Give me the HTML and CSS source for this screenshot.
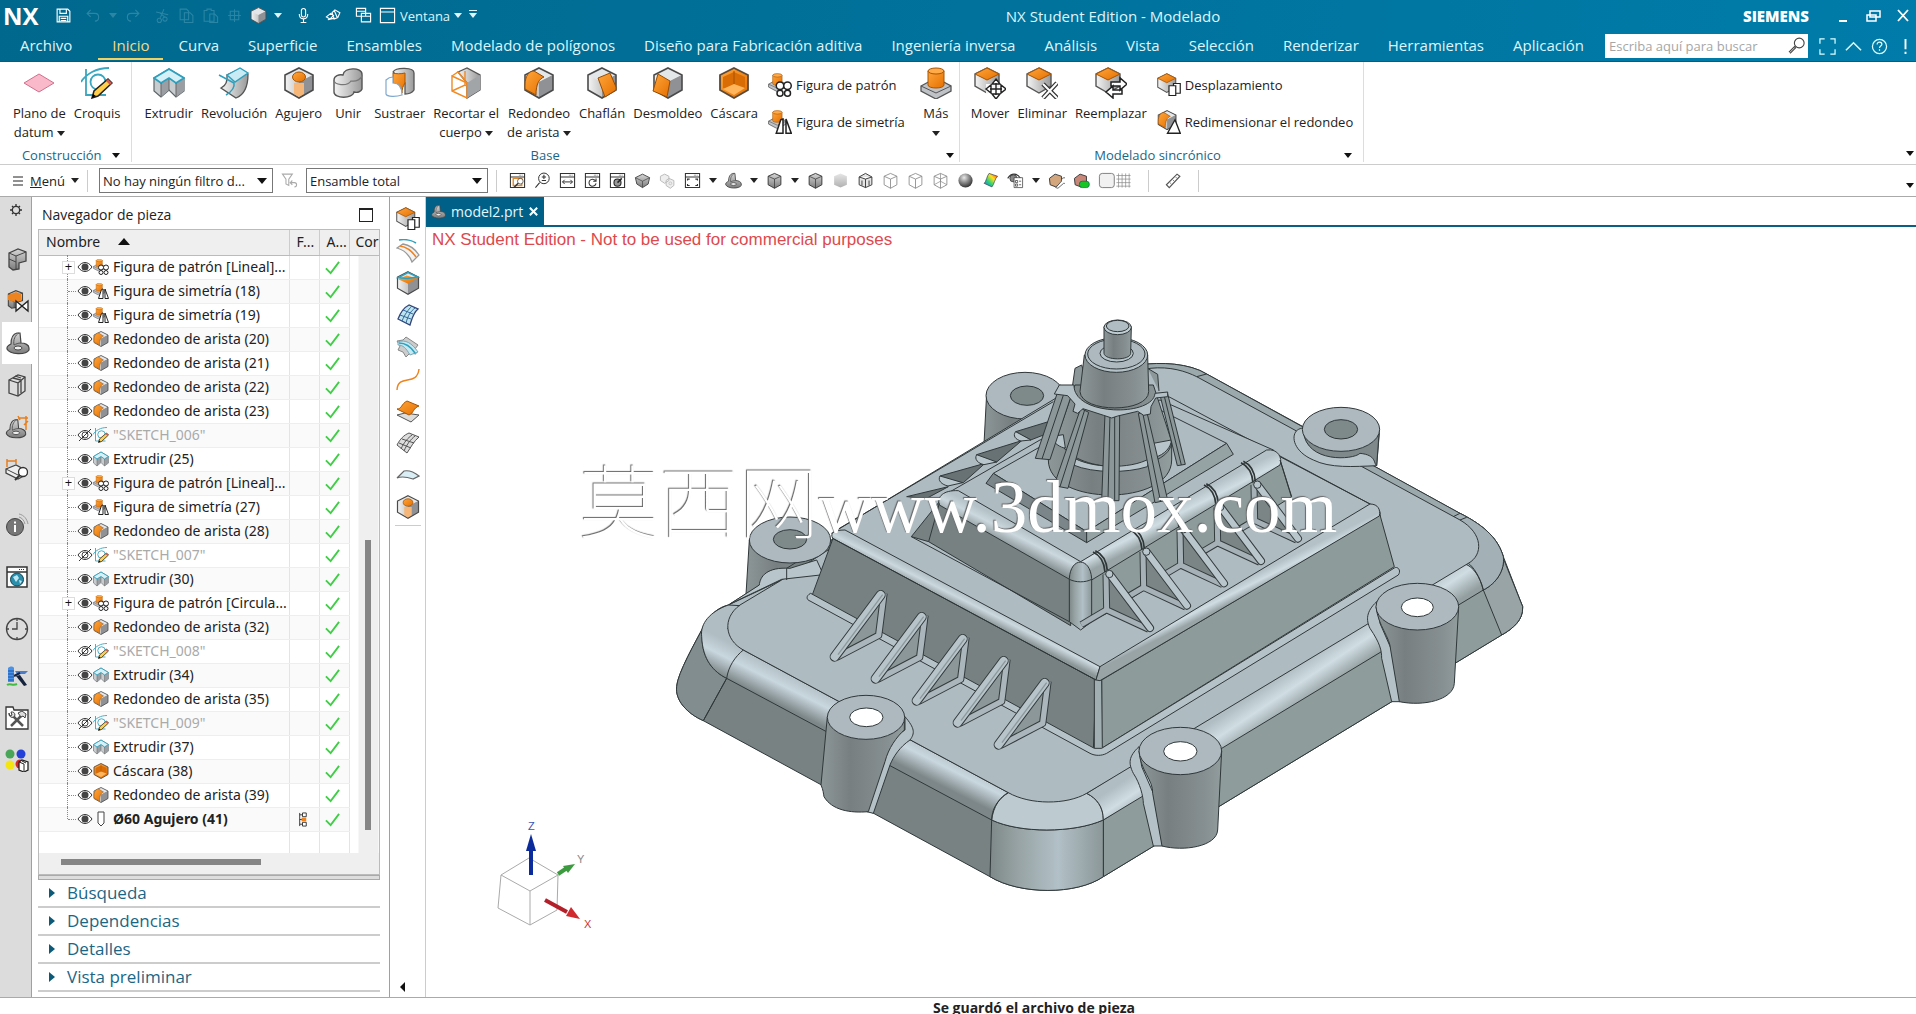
FILE: index.html
```html
<!DOCTYPE html>
<html lang="es">
<head>
<meta charset="utf-8">
<title>NX Student Edition - Modelado</title>
<link rel="stylesheet" href="styles.css">
</head>
<body>
<svg class="defs" aria-hidden="true">
  <defs>
    <linearGradient id="or" x1="0" y1="0" x2="1" y2="1"><stop offset="0" stop-color="#ffa63c"/><stop offset="1" stop-color="#e56f00"/></linearGradient>
    <linearGradient id="gy" x1="0" y1="0" x2="1" y2="0"><stop offset="0" stop-color="#f4f4f4"/><stop offset="1" stop-color="#9a9a9a"/></linearGradient>
    <linearGradient id="gd" x1="0" y1="0" x2="0" y2="1"><stop offset="0" stop-color="#d6d6d6"/><stop offset="1" stop-color="#7c7c7c"/></linearGradient>
    <radialGradient id="ball" cx=".4" cy=".3" r=".7"><stop offset="0" stop-color="#e8e8e8"/><stop offset=".5" stop-color="#8a8a8a"/><stop offset="1" stop-color="#333"/></radialGradient>
    <linearGradient id="rain" x1="0" y1="1" x2="1" y2="0"><stop offset="0" stop-color="#2b62ff"/><stop offset=".35" stop-color="#25d07c"/><stop offset=".65" stop-color="#ffe11c"/><stop offset="1" stop-color="#ff2a1a"/></linearGradient>
    <symbol id="cube" viewBox="0 0 32 32"><path d="M16 1 30 8v15l-14 8L2 23V8z" fill="url(#gy)"/><path d="M16 1 30 8l-14 7L2 8z" fill="#e4e7ea"/><path d="M16 15 30 8v15l-14 8z" fill="#8f9194"/><path d="M16 1 30 8v15l-14 8L2 23V8z" fill="none" stroke="#4a4a4a" stroke-width="1.6"/></symbol>
    <symbol id="plane" viewBox="0 0 32 32"><path d="M16 7 31 16 16 25 1 16z" fill="#f9b9ca" stroke="#d0708c"/></symbol>
    <symbol id="sketch" viewBox="0 0 32 32"><path d="M5 2v26h20M0 15C5 7 15 1 28 1" fill="none" stroke="#3aa6c0" stroke-width="1.8"/><circle cx="17" cy="15" r="7.500" fill="none" stroke="#3aa6c0" stroke-width="1.800"/><path d="m11 31 2-7L27 12l4 4-14 13z" fill="#ffcf4a" stroke="#222" stroke-width="1.5"/><path d="m25 14 2-2 4 4-2 2z" fill="#cf5b55"/><path d="m11 31 1-4 3 2z"/></symbol>
    <symbol id="extrude" viewBox="0 0 32 32"><path d="M1 11 16 2l15 9v13l-8 6-7-7-8 7-7-6z" fill="#c9ccce" stroke="#5b6468" stroke-width="1.2"/><path d="m8 16 8-5v12l-8 7zM23 16l8-5v13l-8 6z" fill="#9b9fa3"/><path d="m1 11 15-9 15 9-8 5-7-5-8 5z" fill="#d6f0f7" stroke="#2da0bd" stroke-width="1.8"/><path d="M8 16v14M23 16v14M16 12v11" stroke="#666"/></symbol>
    <symbol id="revolve" viewBox="0 0 32 32"><path d="M9 8c1 10-4 12-6 13l15 10c8-3 12-10 12-24L22 2z" fill="url(#gy)" stroke="#555" stroke-width="1.300"/><path d="m9 8 13-7 8 5-13 9z" fill="#c9ebf4" stroke="#2da0bd" stroke-width="1.400"/><path d="M1 8l15 8c1 5-3 9-8 12" fill="none" stroke="#2da0bd" stroke-width="1.500"/></symbol>
    <symbol id="hole" viewBox="0 0 32 32"><use href="#cube"/><path d="M11 16h10v11l-5 3-5-3z" fill="#f5b678"/><ellipse cx="16" cy="10" rx="6.500" ry="5" fill="url(#or)" stroke="#a85400"/></symbol>
    <symbol id="unite" viewBox="0 0 32 32"><path d="M2 13c0-4 5-6 9-5 1-8 19-8 19-1v15c-1 3-5 4-8 3-1 7-20 7-20 0z" fill="url(#gy)" stroke="#555" stroke-width="1.400"/><path d="M2 13c0 5 13 7 17 1 5 1 11-2 11-6" fill="none" stroke="#777" stroke-width="1.200"/></symbol>
    <symbol id="subtract" viewBox="0 0 32 32"><path d="M9 5c3-5 21-5 21 1v17c-2 3-5 4-9 4V16z" fill="url(#gy)" stroke="#555" stroke-width="1.300"/><path d="M9 6c3 1 8 1 12 0v10c-2 3-3 6-3 10-2-6-5-9-9-9z" fill="url(#or)" stroke="#a85400"/><path d="M2 13c2-2 4-3 7-3v6c6 0 9 5 9 12-6 2-15 2-16-1z" fill="#fff" stroke="#7fa9cf" stroke-width="1.200"/></symbol>
    <symbol id="trim" viewBox="0 0 32 32"><path d="m8 5 9-4 13 7v15l-13 8V16z" fill="url(#gy)" stroke="#555" stroke-width="1.300"/><path d="m17 16 13-8v15l-13 8z" fill="#a2a5a8"/><path d="m2 9 15 7v15L2 24zM2 9l6-4 9 11M2 24l13-6 2 1M15 4v14" fill="none" stroke="#f08a24" stroke-width="1.400"/></symbol>
    <symbol id="blend" viewBox="0 0 32 32"><use href="#cube"/><path d="M2 18C2 9 6 4 11 4l10 6c-5 2-8 7-8 18L2 22z" fill="url(#or)" stroke="#994c00"/></symbol>
    <symbol id="chamfer" viewBox="0 0 32 32"><use href="#cube"/><path d="m12 11 12-5 6 14v3l-11 7z" fill="url(#or)" stroke="#994c00"/></symbol>
    <symbol id="draft" viewBox="0 0 32 32"><use href="#cube"/><path d="m6 7 12 7-3 16L1 24z" fill="url(#or)" stroke="#994c00"/></symbol>
    <symbol id="shell" viewBox="0 0 32 32"><path d="M16 1 30 8v15l-14 8L2 23V8z" fill="url(#or)" stroke="#5a4a3a" stroke-width="1.800"/><path d="M16 5 27 10v11l-11 6-11-6V10z" fill="#d96c05"/><path d="M16 17 5 22l11 6 11-7z" fill="#ffb55c"/><path d="M16 4v13" stroke="#a85000"/></symbol>
    <symbol id="boss" viewBox="0 0 32 32"><path d="m1 19 15-8 15 8v5l-15 8-15-8z" fill="#bfc2c6" stroke="#555" stroke-width="1.300"/><path d="m1 19 15 7 15-7" fill="none" stroke="#555"/><path d="M8 4v14c0 4 16 4 16 0V4z" fill="url(#or)" stroke="#a85400"/><ellipse cx="16" cy="4" rx="8" ry="3" fill="#ffab4a" stroke="#a85400"/></symbol>
    <symbol id="pattern" viewBox="0 0 32 32"><use href="#boss" width="25" height="25"/><g fill="#fff" stroke="#222" stroke-width="2"><circle cx="16" cy="17" r="5"/><circle cx="26" cy="17" r="5"/><circle cx="16" cy="27" r="4"/><circle cx="26" cy="27" r="4"/></g></symbol>
    <symbol id="mirror" viewBox="0 0 32 32"><use href="#boss" width="25" height="25"/><path d="m17 13 3-1v19h-9zM24 12l7 19h-7z" fill="#fff" stroke="#222" stroke-width="2"/></symbol>
    <symbol id="topface" viewBox="0 0 32 32"><path d="M13 1 25 7v12l-12 7-12-7V7z" fill="url(#gy)" stroke="#555" stroke-width="1.400"/><path d="m13 1 12 6-12 6L1 7z" fill="url(#or)" stroke="#a85400"/></symbol>
    <symbol id="move" viewBox="0 0 32 32"><use href="#topface"/><path d="m22 12 5 5h5v10l-5 0-5 5-5-5h-5V17h5z" fill="#fff" opacity=".9"/><path d="m22 12 4 5h-8zM22 32l4-5h-8zM12 22l5-4v8zM32 22l-5-4v8zM22 16v12M16 22h12" fill="#fff" stroke="#222" stroke-width="1.400"/></symbol>
    <symbol id="delete" viewBox="0 0 32 32"><use href="#topface"/><path d="m17 17 14 14M31 16 17 31" stroke="#333" stroke-width="4.500"/><path d="m17 17 14 14M31 16 17 31" stroke="#fff" stroke-width="2"/></symbol>
    <symbol id="replace" viewBox="0 0 32 32"><use href="#topface"/><path d="M16 15h9v-4l7 6-7 6v-4h-9zM27 23h-9v-4l-7 6 7 6v-4h9z" fill="#fff" stroke="#222" stroke-width="1.500"/></symbol>
    <symbol id="offset" viewBox="0 0 32 32"><use href="#topface"/><path d="M16 17h9v13h-9zM22 14h9v13h-6V17h-3z" fill="#fff" stroke="#222" stroke-width="1.600"/></symbol>
    <symbol id="resize" viewBox="0 0 32 32"><use href="#blend" width="27" height="27"/><path d="m24 13 7 18H14z" fill="#fff" stroke="#222" stroke-width="1.800"/></symbol>
    <symbol id="eye" viewBox="0 0 16 16"><path d="M1 8c4-6 10-6 14 0-4 6-10 6-14 0z" fill="#fff" stroke="#333"/><circle cx="8" cy="8" r="3.500" fill="#444"/></symbol>
    <symbol id="noeye" viewBox="0 0 16 16"><path d="M1 8c4-6 10-6 14 0-4 6-10 6-14 0z" fill="#fff" stroke="#333"/><circle cx="8" cy="8" r="3" fill="none" stroke="#444"/><path d="M2 14 14 2" stroke="#333"/></symbol>
    <symbol id="ok" viewBox="0 0 16 16"><path d="m1 9 5 5L15 2" fill="none" stroke="#3fce46" stroke-width="2"/></symbol>
    <symbol id="bit" viewBox="0 0 16 16"><path d="M5 1h6v11l-3 3-3-3z" fill="#fff" stroke="#444"/></symbol>
    <symbol id="part" viewBox="0 0 24 24"><path d="M1 17c0-2 2-3 4-4 0-6 2-10 6-11h3l1 10c4 0 8 2 8 5v2c-3 5-19 5-22-1z" fill="url(#gd)" stroke="#444" stroke-width="1.200"/><path d="M8 14c-1-5 1-10 5-12M8 14c2-1 4-2 7-2" fill="none" stroke="#555"/><ellipse cx="12" cy="17" rx="4" ry="2" fill="#eee" stroke="#444"/></symbol>
    <symbol id="gcube" viewBox="0 0 24 24"><path d="m12 2 9 4v12l-9 5-9-5V6z" fill="url(#gd)" stroke="#333" stroke-width="1.300"/><path d="m3 6 9 4 9-4M12 10v13" fill="none" stroke="#333"/></symbol>
    <symbol id="wcube" viewBox="0 0 24 24"><path d="m12 2 9 4v12l-9 5-9-5V6zM3 6l9 4 9-4M12 10v13" fill="none" stroke="#888" stroke-width="1.200"/></symbol>
    <symbol id="win" viewBox="0 0 24 24"><path d="M2 2h20v20H2zM2 7h20" fill="#fff" stroke="#333" stroke-width="1.500"/><path d="M14 4.500h6" stroke="#333" stroke-dasharray="1 1"/></symbol>
    <symbol id="surf" viewBox="0 0 24 24"><path d="M2 16C5 8 9 4 13 2l9 4c-5 4-6 10-8 16z" fill="#bfe6f0" stroke="#347" stroke-width="1.300"/><path d="M7 7l10 4M4 12l11 4M6 18C9 11 12 7 16 3M10 20c2-8 5-12 9-15" fill="none" stroke="#369" /></symbol>
    <symbol id="block" viewBox="0 0 24 24"><path d="m4 6 9-4 8 3v9l-7 2v6l-6 1-4-3z" fill="url(#gd)" stroke="#444" stroke-width="1.300"/><path d="m4 6 7 3 10-4M11 9v14M4 12l7 3" fill="none" stroke="#444"/></symbol>
    <linearGradient id="m1" x1="0" y1="0" x2="1" y2="0"><stop offset="0" stop-color="#8d9798"/><stop offset=".35" stop-color="#787f81"/><stop offset=".8" stop-color="#868f91"/><stop offset="1" stop-color="#929d9e"/></linearGradient>
    <linearGradient id="m2" x1="0" y1="0" x2="1" y2="0"><stop offset="0" stop-color="#7e8889"/><stop offset=".25" stop-color="#97a3a4"/><stop offset=".6" stop-color="#b2c0c7"/><stop offset="1" stop-color="#8b9798"/></linearGradient>
    <linearGradient id="rl" gradientUnits="userSpaceOnUse" x1="395" y1="1120" x2="350" y2="1210"><stop offset="0" stop-color="#b0bdc3"/><stop offset=".45" stop-color="#c9d7de"/><stop offset="1" stop-color="#7d8789"/></linearGradient>
    <linearGradient id="rr" gradientUnits="userSpaceOnUse" x1="1830" y1="1150" x2="1890" y2="1240"><stop offset="0" stop-color="#b0bdc3"/><stop offset=".45" stop-color="#d0dde3"/><stop offset="1" stop-color="#929e9f"/></linearGradient>
    <linearGradient id="tl" gradientUnits="userSpaceOnUse" x1="950" y1="900" x2="930" y2="940"><stop offset="0" stop-color="#b4c1c7"/><stop offset=".4" stop-color="#cbd8de"/><stop offset="1" stop-color="#8b9698"/></linearGradient>
    <linearGradient id="tr" gradientUnits="userSpaceOnUse" x1="1720" y1="855" x2="1740" y2="895"><stop offset="0" stop-color="#b4c1c7"/><stop offset=".5" stop-color="#cfdce2"/><stop offset="1" stop-color="#98a4a6"/></linearGradient>
    <linearGradient id="ul" gradientUnits="userSpaceOnUse" x1="1065" y1="675" x2="1035" y2="735"><stop offset="0" stop-color="#b4c1c7"/><stop offset=".4" stop-color="#cbd8de"/><stop offset="1" stop-color="#879294"/></linearGradient>
    <linearGradient id="ur" gradientUnits="userSpaceOnUse" x1="1545" y1="610" x2="1575" y2="670"><stop offset="0" stop-color="#b4c1c7"/><stop offset=".5" stop-color="#d0dde3"/><stop offset="1" stop-color="#98a4a6"/></linearGradient>
    <g id="rib">
      <path d="M662 890 528 1072 655 1008z" fill="#8b9798" stroke="#333b3d" stroke-width="3"/>
      <path d="m672 880-16 126-126 66" fill="none" stroke="#333b3d" stroke-width="22"/>
      <path d="m672 880-16 126-126 66" fill="none" stroke="#aab6bb" stroke-width="16"/>
      <path d="M662 885 524 1070" stroke="#333b3d" stroke-width="30" stroke-linecap="round"/>
      <path d="M662 885 524 1070" stroke="#b7c4ca" stroke-width="24" stroke-linecap="round"/>
      <path d="M668 884 534 1064" stroke="#8c989b" stroke-width="4"/>
    </g>
    <g id="rib2">
      <path d="M1743 488c22 10 34 34 36 60M1750 484c22 10 34 34 36 60" fill="none" stroke="#2f3637" stroke-width="5"/>
      <path d="M1790 550 1785 662 1915 720z" fill="#7b8586" stroke="#333b3d" stroke-width="3"/>
      <path d="m1782 555 2 106-76 45M1785 662l125 58" fill="none" stroke="#333b3d" stroke-width="21"/>
      <path d="m1782 555 2 106-76 45M1785 662l125 58" fill="none" stroke="#a5b1b6" stroke-width="15"/>
      <path d="M1794 556 1914 716" stroke="#333b3d" stroke-width="24" stroke-linecap="round"/>
      <path d="M1794 556 1914 716" stroke="#b9c6cc" stroke-width="18" stroke-linecap="round"/>
      <circle cx="1792" cy="554" r="11" fill="#b9c6cc" stroke="#333b3d" stroke-width="3"/>
    </g>
  </defs>
</svg>

<header class="top">
  <div class="title-row">
    <div class="quick">
      <strong class="nx">NX</strong>
      <button aria-label="Guardar"><svg viewBox="0 0 24 24"><path d="M3 3h15l3 3v15H3zM7 3v6h9V3M6 21v-8h12v8M8 16h8M8 19h8" fill="none" stroke="#fff" stroke-width="1.600"/></svg></button>
      <button class="dim apart" aria-label="Deshacer"><svg viewBox="0 0 24 24"><path d="M8 4 3 9l5 5M3 9h11c7 0 7 11 0 11" fill="none" stroke="currentColor" stroke-width="1.600"/></svg></button><i class="caret dim"></i>
      <button class="dim" aria-label="Rehacer"><svg viewBox="0 0 24 24"><path d="m16 4 5 5-5 5M21 9H10C3 9 3 20 10 20" fill="none" stroke="currentColor" stroke-width="1.600"/></svg></button>
      <button class="dim apart" aria-label="Cortar"><svg viewBox="0 0 24 24"><path d="m3 7 17 4M14 3 9 15m-2 1a3 3 0 1 0 1 0zM15 14a3 3 0 1 0 1 0zM8 8l8 7" fill="none" stroke="currentColor" stroke-width="1.500"/></svg></button>
      <button class="dim" aria-label="Copiar"><svg viewBox="0 0 24 24"><path d="M3 3h9l3 3v12H3zM9 8h8l4 4v10H9z" fill="none" stroke="currentColor" stroke-width="1.500"/></svg></button>
      <button class="dim" aria-label="Pegar"><svg viewBox="0 0 24 24"><path d="M3 5h4V3h6v2h4v15H3zM11 10h7l4 4v8H11z" fill="none" stroke="currentColor" stroke-width="1.500"/></svg></button>
      <button class="dim" aria-label="Pegado especial"><svg viewBox="0 0 24 24"><path d="M12 3v18M3 12h18M6 6h12v12H6z" fill="none" stroke="currentColor" stroke-width="1.500"/></svg></button>
      <button aria-label="Repetir comando"><svg><use href="#cube"/></svg></button><i class="caret"></i>
      <button class="apart" aria-label="Voz"><svg viewBox="0 0 24 24"><rect x="9" y="2" width="6" height="12" rx="3" fill="none" stroke="#fff" stroke-width="1.500"/><path d="M6 10c0 9 12 9 12 0M12 17v4M8 22h8" fill="none" stroke="#fff" stroke-width="1.500"/></svg></button>
      <button class="apart" aria-label="Táctil"><svg viewBox="0 0 24 24"><path d="m2 14 6-5 4 3-5 5zM10 8l4-4 7 4-3 7-5 2zM13 5l4 9M4 18l8-2" fill="none" stroke="#fff" stroke-width="1.600"/></svg></button>
      <button class="apart" aria-label="Cascada"><svg viewBox="0 0 24 24"><path d="M2 2h13v11H2zM9 9h13v12H9zM2 6h13M9 13h13" fill="none" stroke="#fff" stroke-width="1.600"/></svg></button>
      <button class="text"><svg viewBox="0 0 24 24"><path d="M2 2h20v20H2zM2 7h20" fill="none" stroke="#fff" stroke-width="1.600"/></svg>Ventana<i class="caret"></i></button>
      <i class="caret bar"></i>
    </div>
    <h1>NX Student Edition - Modelado</h1>
    <div class="window">
      <b>SIEMENS</b>
      <button aria-label="Minimizar"><svg viewBox="0 0 16 16"><path d="M4 13h8" stroke="#fff" stroke-width="2"/></svg></button>
      <button aria-label="Restaurar"><svg viewBox="0 0 16 16"><path d="M5 3h10v6H5zM2 7h9v6H2z" fill="none" stroke="#fff" stroke-width="1.500"/></svg></button>
      <button aria-label="Cerrar"><svg viewBox="0 0 16 16"><path d="m3 2 10 11M13 2 3 13" stroke="#fff" stroke-width="1.800"/></svg></button>
    </div>
  </div>
  <nav class="tabs">
    <button class="file">Archivo</button><button class="on">Inicio</button><button>Curva</button><button>Superficie</button><button>Ensambles</button><button>Modelado de polígonos</button><button>Diseño para Fabricación aditiva</button><button>Ingeniería inversa</button><button>Análisis</button><button>Vista</button><button>Selección</button><button>Renderizar</button><button>Herramientas</button><button>Aplicación</button>
    <div class="tools">
      <label class="search"><input type="text" placeholder="Escriba aquí para buscar" aria-label="Buscar"><svg viewBox="0 0 24 24"><circle cx="15" cy="8" r="6.500" fill="none" stroke="#444" stroke-width="1.500"/><path d="m10 13-8 8" stroke="#444" stroke-width="3.500"/><path d="m9 14-7 7" stroke="#fff" stroke-width="1"/></svg></label>
      <button aria-label="Pantalla completa"><svg viewBox="0 0 18 18"><path d="M1 6V1h5M12 1h5v5M17 12v5h-5M6 17H1v-5" fill="none" stroke="#dff" stroke-width="1.300"/></svg></button>
      <button aria-label="Minimizar cinta"><svg viewBox="0 0 18 18"><path d="m1 13 8-8 8 8" fill="none" stroke="#dff" stroke-width="1.600"/></svg></button>
      <button aria-label="Ayuda"><svg viewBox="0 0 18 18"><circle cx="9" cy="9" r="7.500" fill="none" stroke="#dff" stroke-width="1.300"/><path d="M6.500 7c0-4 5-3 5-.5 0 2-2.500 2-2.500 4M9 12v1.500" fill="none" stroke="#dff" stroke-width="1.300"/></svg></button>
      <button aria-label="Avisos"><svg viewBox="0 0 18 18"><path d="M9 1v11M9 14.500v2.500" stroke="#fff" stroke-width="2"/></svg></button>
    </div>
  </nav>
</header>

<section class="ribbon">
  <div class="group g-con">
    <div class="items"><button><svg><use href="#plane"/></svg><span>Plano de<br>datum <i class="caret"></i></span></button><button><svg><use href="#sketch"/></svg><span>Croquis</span></button></div>
    <div class="foot"><span>Construcción</span><i class="caret"></i></div>
  </div>
  <div class="group g-base">
    <div class="items">
      <button><svg><use href="#extrude"/></svg><span>Extrudir</span></button>
      <button><svg><use href="#revolve"/></svg><span>Revolución</span></button>
      <button><svg><use href="#hole"/></svg><span>Agujero</span></button>
      <button><svg><use href="#unite"/></svg><span>Unir</span></button>
      <button><svg><use href="#subtract"/></svg><span>Sustraer</span></button>
      <button><svg><use href="#trim"/></svg><span>Recortar el<br>cuerpo <i class="caret"></i></span></button>
      <button><svg><use href="#blend"/></svg><span>Redondeo<br>de arista <i class="caret"></i></span></button>
      <button><svg><use href="#chamfer"/></svg><span>Chaflán</span></button>
      <button><svg><use href="#draft"/></svg><span>Desmoldeo</span></button>
      <button><svg><use href="#shell"/></svg><span>Cáscara</span></button>
      <div class="pair"><button><svg><use href="#pattern"/></svg>Figura de patrón</button><button><svg><use href="#mirror"/></svg>Figura de simetría</button></div>
      <button><svg><use href="#boss"/></svg><span>Más<br><i class="caret"></i></span></button>
    </div>
    <div class="foot"><span>Base</span><i class="caret"></i></div>
  </div>
  <div class="group g-sync">
    <div class="items">
      <button><svg><use href="#move"/></svg><span>Mover</span></button>
      <button><svg><use href="#delete"/></svg><span>Eliminar</span></button>
      <button><svg><use href="#replace"/></svg><span>Reemplazar</span></button>
      <div class="pair"><button><svg><use href="#offset"/></svg>Desplazamiento</button><button><svg><use href="#resize"/></svg>Redimensionar el redondeo</button></div>
    </div>
    <div class="foot"><span>Modelado sincrónico</span><i class="caret"></i></div>
  </div>
  <i class="caret end"></i>
</section>

<section class="bar2">
  <button class="menu"><svg viewBox="0 0 12 12"><path d="M1 2h10M1 6h10M1 10h10" stroke="#222"/></svg><span><u>M</u>enú</span><i class="caret"></i></button>
  <i class="sep"></i>
  <span class="combo first"><select aria-label="Filtro"><option>No hay ningún filtro d...</option></select></span>
  <svg class="filter" viewBox="0 0 24 24"><path d="M2 3h14l-5 7v9l-4-2v-7zM14 15h5c4 0 4 6 0 6M16 12l-3 3 3 3" fill="none" stroke="#aaa" stroke-width="1.500"/></svg>
  <span class="combo"><select aria-label="Alcance"><option>Ensamble total</option></select></span>
  <i class="sep"></i>
  <div class="strip">
    <button aria-label="Ajustar"><svg viewBox="0 0 24 24"><use href="#win"/><path d="M6 9h12v10H6z" fill="#fff" stroke="#e48a2a" stroke-width="2"/><circle cx="16" cy="13" r="4" fill="#fff" stroke="#333"/><path d="m13 16-6 6" stroke="#333" stroke-width="2"/></svg></button>
    <button aria-label="Zoom"><svg viewBox="0 0 24 24"><circle cx="14" cy="9" r="7.500" fill="none" stroke="#333" stroke-width="1.400"/><path d="M14 4v6M11 7h6M11 12h6M8 15l-6 7" stroke="#333" stroke-width="1.500"/></svg></button>
    <button aria-label="Encuadre"><svg viewBox="0 0 24 24"><use href="#win"/><path d="M5 14h14M8 11l-3 3 3 3M16 11l3 3-3 3" fill="none" stroke="#333" stroke-width="1.400"/></svg></button>
    <button aria-label="Girar"><svg viewBox="0 0 24 24"><use href="#win"/><path d="M16 12a5 5 0 1 0 1 4M17 9v4h-4" fill="none" stroke="#333" stroke-width="1.500"/></svg></button>
    <button aria-label="Orientar"><svg viewBox="0 0 24 24"><use href="#win"/><circle cx="12" cy="15" r="5" fill="#999" stroke="#222" stroke-width="1.500"/><path d="m12 15 6-6" stroke="#222" stroke-width="2"/></svg></button>
    <button aria-label="Perspectiva"><svg viewBox="0 0 24 24"><path d="m2 8 10-5 10 5-2 9-8 5-8-5z" fill="url(#gd)" stroke="#444" stroke-width="1.300"/><path d="m2 8 10 5 10-5M12 13v9" fill="none" stroke="#444"/></svg></button>
    <button aria-label="Mostrar"><svg viewBox="0 0 24 24"><path d="m8 3 6 3v6l-6 4-6-4V6zM14 9l7 3v7l-5 4-6-4v-7z" fill="#eee" stroke="#bbb" stroke-width="1.400"/><circle cx="16" cy="16" r="2" fill="none" stroke="#bbb"/></svg></button>
    <button aria-label="Vista completa"><svg viewBox="0 0 24 24"><use href="#win"/><path d="M5 12v-2h3M16 10h3v2M19 17v2h-3M8 19H5v-2" fill="none" stroke="#333" stroke-width="1.600"/></svg></button><i class="caret"></i>
    <button aria-label="Orientación"><svg><use href="#part"/></svg></button><i class="caret"></i>
    <button aria-label="Estilo"><svg><use href="#gcube"/></svg></button><i class="caret"></i>
    <button aria-label="Sombreado con aristas"><svg><use href="#gcube"/></svg></button>
    <button aria-label="Sombreado"><svg viewBox="0 0 24 24"><path d="m12 2 9 4v12l-9 4-9-4V6z" fill="url(#gd)" opacity=".6"/></svg></button>
    <button aria-label="Parcial"><svg viewBox="0 0 24 24"><path d="m12 2 9 5v11l-9 4-9-4V7zM3 7l9 3 9-3M12 10v12M7 12v7M17 12v7" fill="#e4e4e4" stroke="#333" stroke-width="1.300"/></svg></button>
    <button aria-label="Alámbrico"><svg><use href="#wcube"/></svg></button>
    <button aria-label="Aristas ocultas"><svg><use href="#wcube"/></svg></button>
    <button aria-label="Aristas visibles"><svg viewBox="0 0 24 24"><use href="#wcube"/><path d="m3 18 9-5 9 5M12 2v11" fill="none" stroke="#888"/></svg></button>
    <button aria-label="Estudio"><svg viewBox="0 0 24 24"><circle cx="12" cy="12" r="10" fill="url(#ball)"/></svg></button>
    <button aria-label="Análisis de caras"><svg viewBox="0 0 24 24"><path d="M3 16C6 14 7 5 10 2l12 4c-4 3-5 12-8 15z" fill="url(#rain)" stroke="#345"/></svg></button>
    <button aria-label="Mostrar y ocultar"><svg viewBox="0 0 24 24"><path d="M1 9c5-8 13-8 18 0" fill="none" stroke="#333" stroke-width="1.500"/><circle cx="9" cy="9" r="5" fill="#888" stroke="#333"/><path d="M10 8h12v14H10z" fill="#fff" stroke="#333"/><path d="M12 12h3v3h-3zM12 17h3v3h-3zM17 13h3M17 18h3" stroke="#333" fill="none"/></svg></button><i class="caret"></i>
    <button aria-label="Editar objeto"><svg viewBox="0 0 24 24"><path d="m2 9 8-6 9 3v9l-8 6-8-3z" fill="#d3a67d" stroke="#333" stroke-width="1.300"/><path d="m11 22 8-9a4 4 0 1 1 3 3l-8 7z" fill="#fff" stroke="#333"/></svg></button>
    <button aria-label="Activar sección"><svg viewBox="0 0 24 24"><path d="m2 9 8-6 9 3v9l-8 6-8-3z" fill="#c9877a" stroke="#333" stroke-width="1.300"/><rect x="9" y="13" width="14" height="9" rx="4" fill="#16c524" stroke="#064"/></svg></button>
    <button aria-label="Fondo"><svg viewBox="0 0 24 24"><rect x="2" y="2" width="21" height="20" rx="4" fill="#f1f1f1" stroke="#777" stroke-width="1.300"/></svg></button>
    <button class="tight" aria-label="Cuadrícula"><svg viewBox="0 0 24 24"><path d="M2 5h20M2 10h20M2 15h20M2 20h20M5 2v20M10 2v20M15 2v20M20 2v20" stroke="#888"/></svg></button>
    <i class="sep"></i>
    <button aria-label="Medir"><svg viewBox="0 0 24 24"><path d="m2 18 15-15 4 3L6 22z" fill="#fff" stroke="#555" stroke-width="1.600"/><path d="m7 15 2 2M11 11l2 2M15 7l2 2" stroke="#555"/></svg></button>
    <i class="sep"></i>
  </div>
  <i class="caret end"></i>
</section>

<main>
  <nav class="rail">
    <button aria-label="Opciones"><svg viewBox="0 0 24 24"><circle cx="12" cy="12" r="5.500" fill="none" stroke="#333" stroke-width="2"/><path d="M12 3v3M12 18v3M3 12h3M18 12h3M6 6l2 2M16 16l2 2M18 6l-2 2M8 16l-2 2" stroke="#333" stroke-width="2"/></svg></button>
    <button aria-label="Ensambles"><svg><use href="#block"/></svg></button>
    <button aria-label="Restricciones"><svg viewBox="0 0 24 24"><use href="#block" width="20" height="20"/><path d="m3 6 8-3 5 2v7l-6 1-7-2z" fill="#ee8420"/><path d="m11 12 12 10V12L11 22z" fill="#fff" stroke="#222" stroke-width="1.300"/></svg></button>
    <button class="on" aria-label="Navegador de pieza"><svg><use href="#part"/></svg></button>
    <button aria-label="Reutilización"><svg viewBox="0 0 24 24"><path d="m4 7 9-5 7 2v14l-7 5-9-3z" fill="#ddd" stroke="#444" stroke-width="1.300"/><path d="m4 7 9 3v13M13 10l7-6M8 5l8 2v13M10 3l6 2" fill="none" stroke="#444" stroke-width="1.300"/></svg></button>
    <button aria-label="MBD"><svg viewBox="0 0 24 24"><use href="#part" y="3" width="22" height="21"/><path d="M13 3h10M21 1v14M13 1l2 4M23 6l-4 4" stroke="#e77f1f" stroke-width="1.500" fill="none"/></svg></button>
    <button aria-label="Inspección"><svg viewBox="0 0 24 24"><path d="m1 12 10-4 11 6v3l-9 5-12-6z" fill="#eee" stroke="#444" stroke-width="1.300"/><path d="m1 12 12 6 9-4" fill="none" stroke="#444"/><path d="M2 10V2M11 2v5M2 4h9" fill="none" stroke="#e77f1f" stroke-width="1.500"/><circle cx="18" cy="15" r="4.500" fill="#fff" stroke="#333" stroke-width="1.300"/><path d="m15 18-5 5" stroke="#333" stroke-width="2"/></svg></button>
    <button class="wide first" aria-label="Información"><svg viewBox="0 0 24 24"><circle cx="10" cy="14" r="8.500" fill="#777" stroke="#444"/><path d="M10 12v7M10 8.500v2" stroke="#fff" stroke-width="2"/><path d="M14 1c5 1 8 5 9 10M14 4c3 1 5 3 6 7" fill="none" stroke="#999"/></svg></button>
    <button class="wide" aria-label="Navegador web"><svg viewBox="0 0 24 24"><use href="#win"/><circle cx="12" cy="14.500" r="6.500" fill="#2b8fac" stroke="#145"/><path d="M8 12l4-2 2 3-3 4zM14 15l3 1-2 3z" fill="#bfe8f2"/></svg></button>
    <button class="wide" aria-label="Historial"><svg viewBox="0 0 24 24"><circle cx="12" cy="12" r="10.500" fill="none" stroke="#444" stroke-width="1.300"/><path d="M12 5v7H7M12 2v2M12 20v2M2 12h2M20 12h2" fill="none" stroke="#444" stroke-width="1.300"/></svg></button>
    <button aria-label="Estudios"><svg viewBox="0 0 24 24"><path d="M3 4c2-2 5-2 6 0v14H3z" fill="#4a92e6"/><path d="M3 7h6M3 10h6M3 13h6M3 16h6" stroke="#1b55a8"/><path d="M10 7h13l-3 3h-8z" fill="#4a7cc9"/><path d="m11 12 4-1 7 10-3 1z" fill="#15233f"/><path d="M9 12l6-3" stroke="#15233f" stroke-width="2"/><path d="M2 21c3-2 6 1 10-1" stroke="#4b4" stroke-width="2" fill="none"/></svg></button>
    <button aria-label="Herramientas"><svg viewBox="0 0 24 24"><path d="M1 5V1h7l1 3h14v19H1z" fill="#fff" stroke="#333" stroke-width="1.300"/><path d="m7 9 11 11" stroke="#555" stroke-width="2.500"/><path d="m17 9-11 11" stroke="#555" stroke-width="2.500"/><path d="M4 7a3.500 3.500 0 0 0 5 4l1-2a3.500 3.500 0 0 0-4-3l1 3-2 1zM13 7l4-2 4 3-1 4-2-2-2 1z" fill="#ddd" stroke="#444"/></svg></button>
    <button aria-label="Funciones"><svg viewBox="0 0 24 24"><circle cx="5" cy="6" r="4.500" fill="#49a557"/><circle cx="16" cy="6" r="4.500" fill="#2340d8"/><circle cx="5" cy="17" r="4.500" fill="#f4e410"/><circle cx="15" cy="16" r="4.500" fill="#d22"/><path d="m14 14 3-2 6 2v8l-4 2-5-2z" fill="#fff" stroke="#222" stroke-width="1.300"/><path d="M14 14l5 2v7M17 13l4 2" fill="none" stroke="#222"/></svg></button>
  </nav>

  <aside class="panel">
    <div class="panel-head"><h2>Navegador de pieza</h2><button aria-label="Maximizar"></button></div>
    <div class="tree">
      <table>
        <colgroup><col class="c1"><col class="c2"><col class="c2"><col></colgroup>
        <thead><tr><th>Nombre<i class="sort"></i></th><th>F...</th><th>A...</th><th>Cor</th></tr></thead>
        <tbody>
          <tr><td><div class="n"><i class="g plus"></i><svg><use href="#eye"/></svg><svg><use href="#pattern"/></svg><span>Figura de patrón [Lineal]...</span></div></td><td></td><td><svg><use href="#ok"/></svg></td><td></td></tr>
          <tr><td><div class="n"><i class="g"></i><svg><use href="#eye"/></svg><svg><use href="#mirror"/></svg><span>Figura de simetría (18)</span></div></td><td></td><td><svg><use href="#ok"/></svg></td><td></td></tr>
          <tr><td><div class="n"><i class="g"></i><svg><use href="#eye"/></svg><svg><use href="#mirror"/></svg><span>Figura de simetría (19)</span></div></td><td></td><td><svg><use href="#ok"/></svg></td><td></td></tr>
          <tr><td><div class="n"><i class="g"></i><svg><use href="#eye"/></svg><svg><use href="#blend"/></svg><span>Redondeo de arista (20)</span></div></td><td></td><td><svg><use href="#ok"/></svg></td><td></td></tr>
          <tr><td><div class="n"><i class="g"></i><svg><use href="#eye"/></svg><svg><use href="#blend"/></svg><span>Redondeo de arista (21)</span></div></td><td></td><td><svg><use href="#ok"/></svg></td><td></td></tr>
          <tr><td><div class="n"><i class="g"></i><svg><use href="#eye"/></svg><svg><use href="#blend"/></svg><span>Redondeo de arista (22)</span></div></td><td></td><td><svg><use href="#ok"/></svg></td><td></td></tr>
          <tr><td><div class="n"><i class="g"></i><svg><use href="#eye"/></svg><svg><use href="#blend"/></svg><span>Redondeo de arista (23)</span></div></td><td></td><td><svg><use href="#ok"/></svg></td><td></td></tr>
          <tr class="off"><td><div class="n"><i class="g"></i><svg><use href="#noeye"/></svg><svg><use href="#sketch"/></svg><span>"SKETCH_006"</span></div></td><td></td><td><svg><use href="#ok"/></svg></td><td></td></tr>
          <tr><td><div class="n"><i class="g"></i><svg><use href="#eye"/></svg><svg><use href="#extrude"/></svg><span>Extrudir (25)</span></div></td><td></td><td><svg><use href="#ok"/></svg></td><td></td></tr>
          <tr><td><div class="n"><i class="g plus"></i><svg><use href="#eye"/></svg><svg><use href="#pattern"/></svg><span>Figura de patrón [Lineal]...</span></div></td><td></td><td><svg><use href="#ok"/></svg></td><td></td></tr>
          <tr><td><div class="n"><i class="g"></i><svg><use href="#eye"/></svg><svg><use href="#mirror"/></svg><span>Figura de simetría (27)</span></div></td><td></td><td><svg><use href="#ok"/></svg></td><td></td></tr>
          <tr><td><div class="n"><i class="g"></i><svg><use href="#eye"/></svg><svg><use href="#blend"/></svg><span>Redondeo de arista (28)</span></div></td><td></td><td><svg><use href="#ok"/></svg></td><td></td></tr>
          <tr class="off"><td><div class="n"><i class="g"></i><svg><use href="#noeye"/></svg><svg><use href="#sketch"/></svg><span>"SKETCH_007"</span></div></td><td></td><td><svg><use href="#ok"/></svg></td><td></td></tr>
          <tr><td><div class="n"><i class="g"></i><svg><use href="#eye"/></svg><svg><use href="#extrude"/></svg><span>Extrudir (30)</span></div></td><td></td><td><svg><use href="#ok"/></svg></td><td></td></tr>
          <tr><td><div class="n"><i class="g plus"></i><svg><use href="#eye"/></svg><svg><use href="#pattern"/></svg><span>Figura de patrón [Circula...</span></div></td><td></td><td><svg><use href="#ok"/></svg></td><td></td></tr>
          <tr><td><div class="n"><i class="g"></i><svg><use href="#eye"/></svg><svg><use href="#blend"/></svg><span>Redondeo de arista (32)</span></div></td><td></td><td><svg><use href="#ok"/></svg></td><td></td></tr>
          <tr class="off"><td><div class="n"><i class="g"></i><svg><use href="#noeye"/></svg><svg><use href="#sketch"/></svg><span>"SKETCH_008"</span></div></td><td></td><td><svg><use href="#ok"/></svg></td><td></td></tr>
          <tr><td><div class="n"><i class="g"></i><svg><use href="#eye"/></svg><svg><use href="#extrude"/></svg><span>Extrudir (34)</span></div></td><td></td><td><svg><use href="#ok"/></svg></td><td></td></tr>
          <tr><td><div class="n"><i class="g"></i><svg><use href="#eye"/></svg><svg><use href="#blend"/></svg><span>Redondeo de arista (35)</span></div></td><td></td><td><svg><use href="#ok"/></svg></td><td></td></tr>
          <tr class="off"><td><div class="n"><i class="g"></i><svg><use href="#noeye"/></svg><svg><use href="#sketch"/></svg><span>"SKETCH_009"</span></div></td><td></td><td><svg><use href="#ok"/></svg></td><td></td></tr>
          <tr><td><div class="n"><i class="g"></i><svg><use href="#eye"/></svg><svg><use href="#extrude"/></svg><span>Extrudir (37)</span></div></td><td></td><td><svg><use href="#ok"/></svg></td><td></td></tr>
          <tr><td><div class="n"><i class="g"></i><svg><use href="#eye"/></svg><svg><use href="#shell"/></svg><span>Cáscara (38)</span></div></td><td></td><td><svg><use href="#ok"/></svg></td><td></td></tr>
          <tr><td><div class="n"><i class="g"></i><svg><use href="#eye"/></svg><svg><use href="#blend"/></svg><span>Redondeo de arista (39)</span></div></td><td></td><td><svg><use href="#ok"/></svg></td><td></td></tr>
          <tr class="cur"><td><div class="n"><i class="g stop"></i><svg><use href="#eye"/></svg><svg><use href="#bit"/></svg><span>Ø60 Agujero (41)</span></div></td><td><svg viewBox="0 0 16 16"><path d="M5 1v14M5 3h3M5 8h3M5 13h3" stroke="#333"/><path d="M8 1h4v4H8zM8 11h4v4H8z" fill="#fff" stroke="#333"/><path d="M7 6h5v4H7z" fill="#ee8420"/></svg></td><td><svg><use href="#ok"/></svg></td><td></td></tr>
          <tr class="pad"><td></td><td></td><td></td><td></td></tr>
        </tbody>
      </table>
      <i class="vthumb"></i>
      <div class="hscroll"><i></i></div>
    </div>
    <i class="splitter"></i>
    <button class="fold">Búsqueda</button>
    <button class="fold">Dependencias</button>
    <button class="fold">Detalles</button>
    <button class="fold">Vista preliminar</button>
  </aside>

  <nav class="side">
    <button aria-label="Desfase"><svg><use href="#offset"/></svg></button>
    <button aria-label="Curva en cara"><svg viewBox="0 0 24 24"><path d="M3 1c6-1 12 0 17 3" fill="none" stroke="#2da0bd" stroke-width="1.500"/><path d="m1 9 6-4c7 1 12 5 16 11l-7 7C13 15 8 11 1 9z" fill="#f3f3f3" stroke="#999" stroke-width="1.300"/><path d="M4 7c7 1 12 5 16 11" fill="none" stroke="#ee8420" stroke-width="1.500"/></svg></button>
    <button aria-label="Bloque"><svg viewBox="0 0 32 32"><use href="#cube"/><path d="M3 11l11-5 14 4-12 7z" fill="url(#or)"/><path d="M3 9l13-7 13 6-14 2z" fill="none" stroke="#2da0bd" stroke-width="2"/></svg></button>
    <button aria-label="Superficie"><svg><use href="#surf"/></svg></button>
    <button aria-label="Barrido"><svg viewBox="0 0 24 24"><path d="m1 6 6-1 3-3 6 4 6 4-3 4 1 5-6-1-4 4-3-5-5-2 2-4z" fill="#ccc" stroke="#888"/><path d="M2 7c7-3 14 1 20 10l-8 3C10 13 7 10 2 10z" fill="#c6e9f2" stroke="#7ab"/><path d="M3 8c7 0 12 4 16 10" fill="none" stroke="#2da0bd" stroke-width="1.500"/></svg></button>
    <button aria-label="Curva"><svg viewBox="0 0 24 24"><path d="M1 23C2 6 21 20 23 2" fill="none" stroke="#ee8420" stroke-width="1.500"/></svg></button>
    <button aria-label="Espesar"><svg viewBox="0 0 24 24"><path d="m1 16 8-2 14 2-8 7z" fill="#ddd" stroke="#555"/><path d="M1 10c5 0 4-5 10-8l12 5c-6 2-5 7-10 9z" fill="url(#or)" stroke="#a85400"/></svg></button>
    <button aria-label="Malla"><svg viewBox="0 0 24 24"><path d="M1 14C4 8 8 4 13 2l10 4c-5 4-8 10-12 16z" fill="#ddd" stroke="#555"/><path d="M6 8l12 4M3 12l12 5M5 18C8 11 12 7 16 4M8 20c3-7 7-12 11-15" fill="none" stroke="#555"/></svg></button>
    <button aria-label="Lámina"><svg viewBox="0 0 24 24"><path d="m1 15 7-7c5-1 10 1 15 5l-6 3c-6-2-11-3-16-1z" fill="#d9eef5" stroke="#666" stroke-width="1.200"/></svg></button>
    <button aria-label="Agujero"><svg><use href="#hole"/></svg></button>
    <i class="line"></i>
    <i class="more"></i>
  </nav>

  <section class="view">
    <div class="doc-tabs"><button><svg><use href="#part"/></svg>model2.prt<svg class="x" viewBox="0 0 12 12"><path d="m2 2 8 8M10 2l-8 8" stroke="#fff" stroke-width="2.200"/></svg></button></div>
    <div class="canvas">
      <p>NX Student Edition - Not to be used for commercial purposes</p>
      <svg class="scene" viewBox="426 227 1490 770" preserveAspectRatio="xMinYMin meet">
        <g transform="translate(660 300) scale(.33333)" stroke="#2f3739" stroke-width="3" stroke-linejoin="round">
          <!-- rear mounting bosses -->
          <path d="M980 280 970 470 1210 350V287z" fill="url(#m1)"/>
          <ellipse cx="1095" cy="287" rx="117" ry="70" fill="#adb9bf"/><ellipse cx="1101" cy="287" rx="50" ry="29" fill="#7e898a"/>
          <path d="M268 720 257 900 520 800V720z" fill="url(#m1)"/>
          <!-- flange sides -->
          <path d="M50 1160C52 1120 110 1020 130 980 150 940 180 920 205 915L515 720 1440 195C1500 185 1590 190 1640 222L1920 375 2145 500 2400 640C2480 680 2515 720 2530 770L2588 920C2590 960 2560 985 2525 1005L1330 1730C1250 1785 1080 1785 990 1730L130 1262C80 1240 45 1200 50 1160z" fill="#788283"/>
          <path d="M1330 1730V1560L2530 790 2588 920C2590 960 2560 985 2525 1005z" fill="#8f9c9c"/>
          <path d="M990 1730 995 1560C1080 1600 1240 1600 1330 1560V1730C1250 1785 1080 1785 990 1730z" fill="url(#m2)"/>
          <path d="M50 1160C52 1120 110 1020 128 985 118 1060 150 1110 200 1135L130 1262C80 1240 45 1200 50 1160z" fill="#828d8f"/>
          <path d="M2470 870 2525 1005C2560 985 2590 960 2588 920L2530 775C2530 820 2505 850 2470 870z" fill="#98a4a6"/>
          <!-- flange rounded rim -->
          <path d="M1440 195C1500 185 1590 190 1640 222L2400 640V670L1610 240C1580 225 1530 205 1470 212z" fill="#9ba8ac"/>
          <path d="M205 915C150 935 120 970 125 1010 128 1080 160 1115 200 1135L995 1560 1045 1478 250 1050 203 985 365 840z" fill="url(#rl)"/>
          <path d="M995 1560C1080 1600 1240 1600 1330 1560 1330 1520 1310 1495 1280 1480L1045 1478C1010 1500 995 1530 995 1560z" fill="#bdcad0"/>
          <path d="M1330 1560 2470 870C2510 850 2535 810 2530 770 2515 720 2480 680 2400 640L2455 740 1280 1480C1310 1495 1330 1520 1330 1560z" fill="url(#rr)"/>
          <path d="M2400 640C2480 680 2515 720 2530 770 2535 810 2510 850 2470 870 2460 830 2440 800 2415 792L2380 650z" fill="#a3b0b5"/>
          <!-- flange top -->
          <path d="M1470 205C1530 198 1580 215 1610 230L2400 660C2470 700 2470 765 2425 790L1280 1480C1220 1515 1110 1515 1045 1478L250 1050C195 1020 185 955 240 915L365 840 1200 300z" fill="#aebbc1"/>
          <path d="M210 912 365 838 490 824 470 780 390 805C320 800 300 830 298 855z" fill="#b8c5ca"/>
          <path d="M380 805v35" fill="none"/>
          <ellipse cx="390" cy="720" rx="122" ry="69" fill="#adb9bf"/><ellipse cx="390" cy="718" rx="50" ry="29" fill="#7e898a"/>
          <!-- right rear boss -->
          <path d="M1925 385C1890 390 1890 450 1960 480 2010 505 2080 500 2150 497L2158 400z" fill="#b7c4ca"/>
          <path d="M1930 395C1940 490 2080 480 2100 460 2150 465 2140 490 2150 497L2158 388z" fill="#7f898b"/>
          <ellipse cx="2043" cy="388" rx="116" ry="66" fill="#adb9bf"/><ellipse cx="2043" cy="388" rx="50" ry="29" fill="#7e898a"/>
          <!-- middle tier -->
          <path d="M515 700 1195 290 1500 280 1530 292 2130 612C2160 620 2165 640 2158 655L1312 1140z" fill="#aebbc1"/>
          <path d="M520 712 1308 1140 1300 1350 455 890z" fill="#778182"/>
          <path d="M1325 1140 2160 645 2203 800 1325 1345z" fill="#8e9b9b"/>
          <path d="M1303 1138h22l2 210h-24z" fill="#a2afb2"/>
          <path d="M452 880C436 888 440 900 450 903L1290 1360C1305 1368 1325 1368 1340 1360L2215 825C2225 810 2212 798 2203 804L1325 1345H1303z" fill="#b5c2c7"/>
          <path d="M555 690C520 690 510 700 518 715L1308 1140 1320 1100z" fill="url(#tl)"/>
          <path d="M1320 1100 2130 612C2155 612 2162 630 2158 648L1320 1142 1308 1140z" fill="url(#tr)"/>
          <path d="M518 715 1308 1140" fill="none"/>
          <path d="m1860 470 270 142" fill="none"/>
          <!-- rear left ribs -->
          <g fill="#687274"><path d="m1175 362-108 33 45 25 90-35zM1085 422l-135 42c8 18 30 18 60 22zM975 490l-135 38c8 16 40 18 70 20zM865 560l-125 30 60 5z"/></g>
          <g fill="#b9c6cc"><path d="M1067 395c-10 12 0 24 16 28l30-3zM950 464c-8 14 4 26 22 30l38-8zM840 528c-8 14 6 26 24 30l44-10z"/></g>
          <path d="m530 690 650-385" fill="none"/>
          <!-- upper tier -->
          <path d="M862 580 1140 420 1500 300 1840 450 1265 800z" fill="#aebbc1"/>
          <path d="m838 605 394 232v140L806 725l-52-15z" fill="#778182"/>
          <path d="M1292 835 1862 485 1895 590 1350 935 1290 965z" fill="#8e9b9b"/>
          <path d="M895 572C850 570 830 590 838 615L1232 840 1262 785z" fill="url(#ul)"/>
          <path d="M1262 785 1820 450C1855 445 1868 475 1860 495L1295 840z" fill="url(#ur)"/>
          <path d="M1228 835C1232 770 1290 770 1295 835V965L1262 990 1228 965z" fill="url(#m2)"/>
          <path d="M1228 838c20 10 48 10 67 0" fill="none"/>
          <path d="M754 710 1228 965M806 725 838 610M1860 480l34 110" fill="none"/>
          <!-- small plate -->
          <path d="M1000 520 1300 350 1500 330 1700 430 1280 695z" fill="#aebbc1"/>
          <path d="m1000 520 280 175v33L978 550z" fill="#7a8689"/>
          <path d="M1280 695 1700 430l20 33-440 265z" fill="#96a3a5"/>
          <!-- tower -->
          <path d="M1165 480C1165 620 1535 620 1535 480V430H1165z" fill="url(#m1)"/>
          <path d="m1235 275 10-70 20-10 20 70M1463 205l30 18 4 50" fill="#8c9799"/>
          <path d="M1245 255 1195 400C1200 530 1530 530 1535 425L1480 255z" fill="url(#m1)"/>
          <path d="M1235 470C1290 505 1410 510 1470 475L1462 500C1400 520 1300 520 1240 495zM1170 410l40-6 6 40c-14 0-36-16-46-34zM1480 430l54-10c0 20-20 45-50 52z" fill="#b7c4ca"/>
          <path d="m1200 255-74 220 44 4 68-205zM1262 325l-80 232 42 8 62-228zM1335 340l-10 262h52l2-262zM1435 340l50 268 38-8-62-262zM1500 285l52 212 24-4-54-215z" fill="#8b9799"/>
          <path d="m1218 262-72 215M1274 330l-74 230M1350 342l-6 258M1364 342v258M1448 338l54 268M1512 285l52 210" fill="none"/>
          <path d="M1198 255h44C1240 350 1480 350 1485 280l38-4v14l-36 4-14 26-2 22-20 4-18-12-60 14-18 6-24-8-62-20-16 14-14-6 6-22-22-25-40-5z" fill="#b4c1c6"/>
          <path d="M1273 165 1260 275C1265 340 1465 340 1466 275L1463 165z" fill="url(#m1)"/>
          <ellipse cx="1369" cy="165" rx="94" ry="52" fill="#b4c1c6"/><ellipse cx="1369" cy="162" rx="86" ry="45" fill="#adb9bf"/>
          <ellipse cx="1370" cy="160" rx="50" ry="26" fill="#b7c4ca"/>
          <path d="M1332 80v80C1335 182 1410 182 1412 160L1414 80z" fill="url(#m1)"/>
          <ellipse cx="1373" cy="82" rx="41" ry="22" fill="#c0cdd3"/><ellipse cx="1373" cy="78" rx="34" ry="17" fill="#b0bdc2"/>
          <!-- repeated ribs -->
          <use href="#rib2"/><use href="#rib2" x="-111" y="67"/><use href="#rib2" x="-222" y="134"/><use href="#rib2" x="-333" y="201"/><use href="#rib2" x="-444" y="268"/>
          <use href="#rib"/><use href="#rib" x="123" y="66"/><use href="#rib" x="246" y="132"/><use href="#rib" x="369" y="198"/><use href="#rib" x="492" y="264"/>
          <!-- seams -->
          <path d="M200 1135C205 1100 225 1070 250 1050M200 1135 130 1262M995 1560C1000 1520 1020 1490 1045 1478M2470 870C2460 830 2440 800 2425 790M1610 230l30-8M2400 660l20-8M205 915l35 2" fill="none"/>
          <!-- front bosses -->
          <path d="M735 1250C765 1285 765 1300 750 1320 720 1340 700 1370 690 1395L640 1540 620 1535 672 1390C680 1350 700 1310 735 1290z" fill="#b4c1c6"/>
          <path d="M502 1250 483 1455C490 1470 490 1480 492 1490 515 1530 570 1540 625 1535L675 1385C685 1345 710 1310 733 1290V1250z" fill="url(#m1)"/>
          <ellipse cx="618" cy="1252" rx="116" ry="66" fill="#adb9bf"/><ellipse cx="619" cy="1252" rx="50" ry="28" fill="#fff"/>
          <path d="M1437 1340C1405 1370 1405 1390 1420 1420 1440 1450 1450 1490 1450 1510L1480 1638H1508L1480 1480 1445 1400z" fill="#b4c1c6"/>
          <path d="M1437 1353C1440 1410 1480 1440 1478 1480L1506 1638C1570 1655 1670 1640 1673 1590L1685 1353z" fill="url(#m1)"/>
          <ellipse cx="1561" cy="1353" rx="124" ry="71" fill="#adb9bf"/><ellipse cx="1561" cy="1354" rx="50" ry="29" fill="#fff"/>
          <path d="M2150 905C2118 935 2118 960 2130 985 2160 1030 2165 1050 2165 1075L2195 1205H2220L2195 1050 2160 970z" fill="#b4c1c6"/>
          <path d="M2148 920C2155 980 2190 1010 2192 1050L2218 1205C2290 1220 2380 1200 2383 1150L2396 920z" fill="url(#m1)"/>
          <ellipse cx="2272" cy="920" rx="124" ry="70" fill="#adb9bf"/><ellipse cx="2272" cy="922" rx="48" ry="28" fill="#fff"/>
        </g>
        <g class="triad">
          <path d="m501 875 28-17 29 17-28 16zM501 875l-3 33 32 17 27-15 1-35M530 891v34" fill="none" stroke="#aaa"/>
          <path d="M531 875v-28" stroke="#0b2a9c" stroke-width="4"/><path d="m531 834 5 17h-10z" fill="#0b2a9c"/>
          <path d="m558 874 9-6" stroke="#3c9a3f" stroke-width="4"/><path d="m575 864-7 9-5-7z" fill="#3c9a3f"/>
          <path d="m545 900 22 12" stroke="#b3202a" stroke-width="4"/><path d="m580 919-9-12-5 9z" fill="#d02a2f"/>
          <text x="528" y="830" fill="#3a55b5">Z</text><text x="577" y="863" fill="#888">Y</text><text x="584" y="928" fill="#c33">X</text>
        </g>
        <text class="mark" x="579" y="532"><tspan class="cjk">莫西网</tspan>www.3dmox.com</text>
      </svg>
    </div>
  </section>
</main>
<footer>Se guardó el archivo de pieza</footer>
</body>
</html>
```

FILE: styles.css
```css
* { box-sizing: border-box; }
body { margin: 0; height: 100vh; display: flex; flex-direction: column; overflow: hidden; background: #fff; color: #222; font: 13px/18px "Open Sans", "Noto Sans", sans-serif; }
button { border: 0; padding: 0; margin: 0; background: none; font: inherit; color: inherit; white-space: nowrap; }
svg { display: block; flex: none; }
i { flex: none; }
.defs { position: absolute; width: 0; height: 0; }
.caret { display: inline-block; width: 0; height: 0; border: 4px solid transparent; border-top: 5px solid currentColor; border-bottom: 0; vertical-align: middle; }

.top { flex: none; background: linear-gradient(100deg, #00688d, #007caa); color: #dff5fb; border-bottom: 1px solid #005f83; font-size: 15px; line-height: 20px; }
.title-row { display: grid; grid-template-columns: 1fr auto 1fr; align-items: center; height: 31px; }
.title-row h1 { margin: 0 0 0 310px; font-size: 15px; font-weight: 400; grid-column: 2; }
.quick { display: flex; align-items: center; gap: 7px; padding-left: 3px; width: 0; }
.quick .nx { font-size: 24px; line-height: 24px; color: #fff; width: 45px; flex: none; }
.quick svg { width: 17px; height: 17px; }
.quick button { flex: none; }
.quick .dim { color: #2b86a6; }
.quick .apart { margin-left: 6px; }
.quick .text { display: flex; align-items: center; gap: 4px; font-size: 13px; }
.quick .bar::before { content: ""; position: absolute; width: 8px; margin: -8px 0 0 -4px; border-top: 1px solid; }
.window { display: flex; justify-content: flex-end; align-items: center; gap: 14px; padding-right: 5px; color: #fff; }
.window b { font-weight: 800; font-size: 15px; margin-right: 12px; }
.window svg { width: 16px; height: 16px; }
.tabs { display: flex; height: 30px; gap: 1px; }
.tabs > button { padding: 1px 14px 0; border-bottom: 2px solid transparent; height: 29px; }
.tabs > .file { padding: 1px 25px 0 20px; }
.tabs > .on { color: #f0dc86; border-color: #f0d264; }
.tools { display: flex; align-items: center; gap: 9px; margin-left: auto; padding-right: 2px; }
.tools button svg { width: 17px; height: 17px; }
.search { display: flex; align-items: center; width: 203px; height: 24px; background: #fff; padding-right: 2px; margin-right: 2px; }
.search input { flex: 1; min-width: 0; border: 0; outline: 0; padding: 0 4px; background: none; font: 13px/18px "Open Sans", sans-serif; }
.search input::placeholder { color: #a6a6a6; }
.search svg { width: 18px; height: 18px; }

.ribbon { flex: none; display: flex; height: 103px; border-bottom: 1px solid #ccc; position: relative; }
.group { display: flex; flex-direction: column; padding: 5px 7px 0; margin-bottom: 2px; border-right: 1px solid #ddd; }
.items { display: flex; flex: 1; min-height: 0; }
.items > button { display: flex; flex-direction: column; align-items: center; padding: 0 4px; min-width: 44px; gap: 5px; line-height: 19px; }
.items > button svg { width: 32px; height: 32px; }
.g-con .items { padding-left: 2px; }
.g-base { padding: 5px 1px 0 8px; }
.pair { display: flex; flex-direction: column; gap: 7px; padding: 3px 3px 0 6px; }
.g-base .pair { padding-right: 9px; }
.pair button { display: flex; align-items: center; gap: 4px; height: 30px; }
.pair svg { width: 24px; height: 24px; }
.foot { display: flex; align-items: center; color: #1b6685; height: 14px; flex: none; }
.foot span { flex: 1; text-align: center; padding-right: 4px; }
.foot .caret { color: #111; margin: 0 4px 0 -8px; }
.end { position: absolute; right: 2px; bottom: 8px; color: #111; }

.bar2 { flex: none; display: flex; align-items: center; height: 32px; border-bottom: 1px solid #aaa; position: relative; padding-left: 12px; }
.menu { display: flex; align-items: center; gap: 6px; }
.menu svg { width: 12px; height: 12px; }
.sep { width: 1px; height: 22px; background: #ccc; margin: 0 8px; }
.combo { position: relative; width: 182px; }
.combo.first { width: 174px; margin-left: 3px; }
.combo select { appearance: none; width: 100%; height: 25px; border: 1px solid #777; border-radius: 0; background: #fff; padding: 0 3px; font: inherit; color: inherit; }
.combo::after { content: ""; position: absolute; right: 6px; top: 10px; border: 5px solid transparent; border-top: 6px solid #111; border-bottom: 0; }
.filter { width: 17px; height: 17px; margin: 0 8px; }
.strip { display: flex; align-items: center; gap: 8px; }
.strip svg { width: 17px; height: 17px; }
.strip .tight { margin-left: -8px; }
.bar2 > .sep:nth-of-type(2) { margin-right: 12px; }

main { flex: 1; display: flex; min-height: 0; }
.rail { width: 32px; flex: none; background: #dcdcdc; border-right: 1px solid #a0a0a0; display: flex; flex-direction: column; }
.rail button { height: 42px; display: flex; align-items: center; justify-content: center; padding-left: 3px; flex: none; }
.rail button svg { width: 24px; height: 24px; }
.rail button:first-child { height: 26px; margin-bottom: 15px; padding: 0; }
.rail button:first-child svg { width: 16px; height: 16px; }
.rail .on { background: #fff; margin-left: 2px; margin-right: -1px; padding-left: 1px; }
.rail .wide { height: 52px; }
.rail .first { margin-top: 9px; }

.panel { width: 358px; flex: none; border-right: 1px solid #a0a0a0; padding: 0 9px 0 6px; display: flex; flex-direction: column; }
.panel-head { display: flex; justify-content: space-between; align-items: center; height: 32px; padding: 3px 7px 0 4px; flex: none; }
.panel-head h2 { margin: 0; font-weight: 400; font-size: 14px; }
.panel-head button { width: 14px; height: 14px; border: 1px solid #222; border-top-width: 2px; }
.tree { border: 1px solid #bbb; position: relative; flex: none; background: #efefef; }
table { width: 100%; table-layout: fixed; border-collapse: collapse; font-size: 14px; font-family: "Noto Sans", "Open Sans", sans-serif; }
.c1 { width: 250px; }
.c2 { width: 30px; }
th { height: 25px; padding: 0 0 0 7px; text-align: left; font-weight: 400; overflow: hidden; white-space: nowrap; border-right: 1px solid #ccc; border-bottom: 1px solid #bbb; background: #efefef; }
th:last-child { border-right: 0; padding-left: 6px; }
.sort { display: inline-block; margin-left: 18px; border: 6px solid transparent; border-bottom: 7px solid #111; border-top: 0; vertical-align: 2px; }
td { height: 24px; padding: 0; border-right: 1px solid #e4e4e4; border-bottom: 1px solid #eee; background: #fff; }
tr:nth-child(even) td { background: #fafafa; }
.pad td { height: 22px; border-bottom: 0; }
td:last-child, tr:nth-child(even) td:last-child { background: linear-gradient(90deg, #fff 9px, #efefef 9px); border: 0; }
td > svg { width: 15px; height: 15px; margin: 0 0 0 5px; }
.n { display: flex; align-items: center; height: 23px; }
.n svg { width: 16px; height: 16px; }
.n span { margin-left: 4px; white-space: nowrap; }
.off { color: #aaa; }
.cur { font-weight: 700; }
.g { width: 38px; height: 24px; position: relative; }
.g::before { content: ""; position: absolute; left: 28px; top: 0; bottom: 0; border-left: 1px dotted #888; }
.g::after { content: ""; position: absolute; left: 29px; top: 12px; width: 8px; border-top: 1px dotted #888; }
.g.stop::before { bottom: 12px; }
.g.plus::after { content: "+"; left: 23px; top: 6px; width: 11px; height: 11px; border: 1px solid #ddd; background: #fff; font: 13px/9px "Open Sans", sans-serif; text-align: center; color: #111; }
.vthumb { position: absolute; right: 8px; top: 310px; bottom: 44px; width: 6px; background: #858585; }
.hscroll { height: 21px; padding: 6px 0 0 22px; }
.hscroll i { display: block; width: 200px; height: 6px; background: #858585; }
.splitter { height: 5px; background: #ddd; border: 1px solid #aaa; }
.fold { display: flex; align-items: center; gap: 12px; height: 28px; border-bottom: 2px solid #ccc; color: #1b6685; font-size: 17px; padding-left: 11px; flex: none; }
.fold::before { content: ""; border: 5px solid transparent; border-left: 6px solid #0d5a78; border-right: 0; }

.side { width: 36px; flex: none; border-right: 1px solid #ccc; display: flex; flex-direction: column; align-items: center; padding-top: 6px; }
.side button { height: 32px; display: flex; align-items: center; }
.side svg { width: 24px; height: 24px; }
.side .line { width: 26px; height: 1px; background: #ccc; margin-top: 2px; }
.side .more { margin: auto 10px 5px 0; border: 5px solid transparent; border-right: 5px solid #111; border-left: 0; }

.view { flex: 1; min-width: 0; display: flex; flex-direction: column; }
.doc-tabs { flex: none; height: 30px; border-bottom: 2px solid #0a5f85; }
.doc-tabs button { display: flex; align-items: center; gap: 5px; height: 29px; padding: 0 5px; background: #006088; color: #e6f6fb; font-size: 14px; }
.doc-tabs svg { width: 15px; height: 15px; }
.doc-tabs .x { width: 11px; height: 11px; }
.canvas { flex: 1; min-height: 0; position: relative; background: #fff; }
.canvas p { position: absolute; left: 6px; top: 3px; margin: 0; font: 17px/20px "Liberation Sans", Arial, sans-serif; color: #dd4a4e; }
.scene { width: 100%; height: 100%; }
.triad { font: 11px "Liberation Sans", Arial, sans-serif; }
.mark { font: 73px "Liberation Serif", "Times New Roman", serif; fill: #fff; text-shadow: -1px -1px 1px #666; }
.cjk { font-family: "Noto Sans CJK SC", sans-serif; font-size: 80px; font-weight: 100; }

footer { flex: none; height: 17px; border-top: 1px solid #aaa; padding-left: 152px; text-align: center; font-size: 14px; font-weight: 700; line-height: 20px; }
```
